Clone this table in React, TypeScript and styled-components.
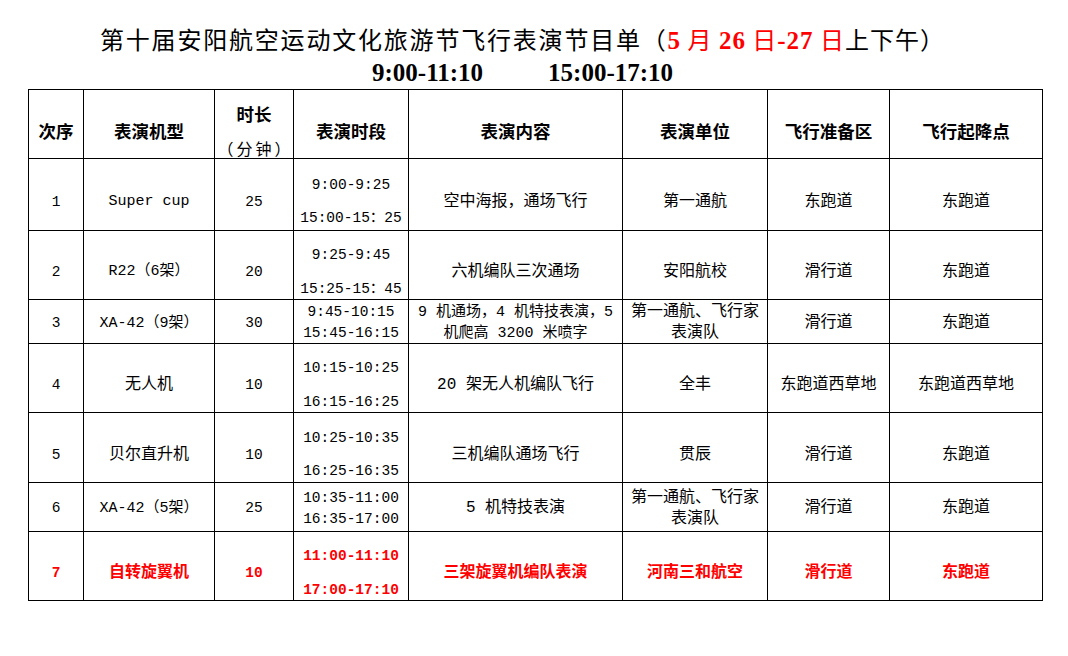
import React from 'react';
import styled, { createGlobalStyle } from 'styled-components';

const Global = createGlobalStyle`
  html, body { margin: 0; padding: 0; background: #fff; }
  body { font-family: "Noto Sans CJK SC", sans-serif; color: #000; }
`;

const Page = styled.div`
  width: 1068px;
  height: 656px;
  box-sizing: border-box;
  padding-top: 22px;
  overflow: hidden;
`;

const TitleLine = styled.div`
  height: 34px;
  line-height: 34px;
  padding-left: 100px;
  font-family: "Noto Sans CJK SC", sans-serif;
  font-size: 24px;
  letter-spacing: 1.8px;
  white-space: nowrap;
`;

const Tail = styled.span`
  letter-spacing: 1px;
`;

const Red = styled.span`
  color: #ff0000;
`;

const Digits = styled.span`
  font-family: "Liberation Serif", serif;
  font-weight: 700;
  font-size: 25px;
`;

const TimeLine = styled.div`
  display: flex;
  gap: 65px;
  height: 33px;
  line-height: 33px;
  padding-left: 372px;
  font-family: "Liberation Serif", serif;
  font-weight: 700;
  font-size: 25px;
  white-space: nowrap;
`;

const COLS = '55px 131px 79px 115px 214px 145px 122px 153px';

const Table = styled.div`
  margin-left: 28px;
  width: 1015px;
  box-sizing: border-box;
  border-left: 1px solid #000;
  border-top: 1px solid #000;
  display: flex;
  flex-direction: column;
`;

const Row = styled.div<{ $h: number }>`
  flex: none;
  display: grid;
  grid-template-columns: ${COLS};
  grid-template-rows: ${(p) => p.$h}px;
  height: ${(p) => p.$h}px;
`;

type Kind = 'head' | 'num' | 'model' | 'text';

const sizes: Record<Kind, string> = {
  head: '17.5px',
  num: '14.5px',
  model: '15px',
  text: '16px',
};

const Cell = styled.div<{ $kind: Kind; $compact?: boolean; $red?: boolean }>`
  box-sizing: border-box;
  min-height: 0;
  border-right: 1px solid #000;
  border-bottom: 1px solid #000;
  display: flex;
  flex-direction: column;
  align-items: center;
  justify-content: center;
  gap: ${(p) => (p.$compact ? 0 : 11.5)}px;
  padding-top: ${(p) => (p.$compact ? 3 : 14)}px;
  text-align: center;
  white-space: nowrap;
  line-height: ${(p) => (p.$compact ? 21 : 22)}px;
  font-family: ${(p) =>
    p.$kind === 'head'
      ? '"Noto Sans CJK SC", sans-serif'
      : '"Liberation Mono", "Noto Sans CJK SC", monospace'};
  font-size: ${(p) => sizes[p.$kind]};
  font-weight: ${(p) => (p.$kind === 'head' || p.$red ? 700 : 400)};
  color: ${(p) => (p.$red ? '#ff0000' : '#000')};
`;

const Line = styled.div<{ $dense?: boolean }>`
  font-size: ${(p) => (p.$dense ? '15px' : 'inherit')};
`;

const Sub = styled.div`
  font-weight: 400;
  font-size: 16px;
  letter-spacing: 3px;
  margin-right: -3px;
`;

type RowData = {
  idx: string;
  model: string;
  latinModel?: boolean;
  dur: string;
  time: string[];
  content: string[];
  dense?: boolean;
  unit: string[];
  prep: string;
  land: string;
  h: number;
  compact?: boolean;
  red?: boolean;
};

const rows: RowData[] = [
  { idx: '1', model: 'Super cup', latinModel: true, dur: '25', time: ['9:00-9:25', '15:00-15：25'], content: ['空中海报，通场飞行'], unit: ['第一通航'], prep: '东跑道', land: '东跑道', h: 72 },
  { idx: '2', model: 'R22（6架）', latinModel: true, dur: '20', time: ['9:25-9:45', '15:25-15：45'], content: ['六机编队三次通场'], unit: ['安阳航校'], prep: '滑行道', land: '东跑道', h: 69 },
  { idx: '3', model: 'XA-42（9架）', latinModel: true, dur: '30', time: ['9:45-10:15', '15:45-16:15'], content: ['9 机通场，4 机特技表演，5', '机爬高 3200 米喷字'], dense: true, unit: ['第一通航、飞行家', '表演队'], prep: '滑行道', land: '东跑道', h: 44, compact: true },
  { idx: '4', model: '无人机', dur: '10', time: ['10:15-10:25', '16:15-16:25'], content: ['20 架无人机编队飞行'], unit: ['全丰'], prep: '东跑道西草地', land: '东跑道西草地', h: 69 },
  { idx: '5', model: '贝尔直升机', dur: '10', time: ['10:25-10:35', '16:25-16:35'], content: ['三机编队通场飞行'], unit: ['贯辰'], prep: '滑行道', land: '东跑道', h: 70 },
  { idx: '6', model: 'XA-42（5架）', latinModel: true, dur: '25', time: ['10:35-11:00', '16:35-17:00'], content: ['5 机特技表演'], unit: ['第一通航、飞行家', '表演队'], prep: '滑行道', land: '东跑道', h: 49, compact: true },
  { idx: '7', model: '自转旋翼机', dur: '10', time: ['11:00-11:10', '17:00-17:10'], content: ['三架旋翼机编队表演'], unit: ['河南三和航空'], prep: '滑行道', land: '东跑道', h: 69, red: true },
];

const headers = ['次序', '表演机型', '时长', '表演时段', '表演内容', '表演单位', '飞行准备区', '飞行起降点'];

const Lines: React.FC<{ items: string[]; dense?: boolean }> = ({ items, dense }) => (
  <>
    {items.map((t, i) => (
      <Line key={i} $dense={dense}>
        {t}
      </Line>
    ))}
  </>
);

export default function App() {
  return (
    <Page>
      <Global />
      <TitleLine>
        第十届安阳航空运动文化旅游节飞行表演节目单（
        <Tail>
          <Red>
            <Digits>5</Digits> 月 <Digits>26</Digits> 日<Digits>-27</Digits> 日
          </Red>
          上下午）
        </Tail>
      </TitleLine>
      <TimeLine>
        <span>9:00-11:10</span>
        <span>15:00-17:10</span>
      </TimeLine>
      <Table>
        <Row $h={69}>
          {headers.map((h) =>
            h === '时长' ? (
              <Cell key={h} $kind="head">
                <Line>时长</Line>
                <Sub>（分钟）</Sub>
              </Cell>
            ) : (
              <Cell key={h} $kind="head">
                {h}
              </Cell>
            )
          )}
        </Row>
        {rows.map((r) => (
          <Row key={r.idx} $h={r.h}>
            <Cell $kind="num" $compact={r.compact} $red={r.red}>{r.idx}</Cell>
            <Cell $kind={r.latinModel ? 'model' : 'text'} $compact={r.compact} $red={r.red}>{r.model}</Cell>
            <Cell $kind="num" $compact={r.compact} $red={r.red}>{r.dur}</Cell>
            <Cell $kind="num" $compact={r.compact} $red={r.red}>
              <Lines items={r.time} />
            </Cell>
            <Cell $kind="text" $compact={r.compact} $red={r.red}>
              <Lines items={r.content} dense={r.dense} />
            </Cell>
            <Cell $kind="text" $compact={r.compact} $red={r.red}>
              <Lines items={r.unit} />
            </Cell>
            <Cell $kind="text" $compact={r.compact} $red={r.red}>{r.prep}</Cell>
            <Cell $kind="text" $compact={r.compact} $red={r.red}>{r.land}</Cell>
          </Row>
        ))}
      </Table>
    </Page>
  );
}
